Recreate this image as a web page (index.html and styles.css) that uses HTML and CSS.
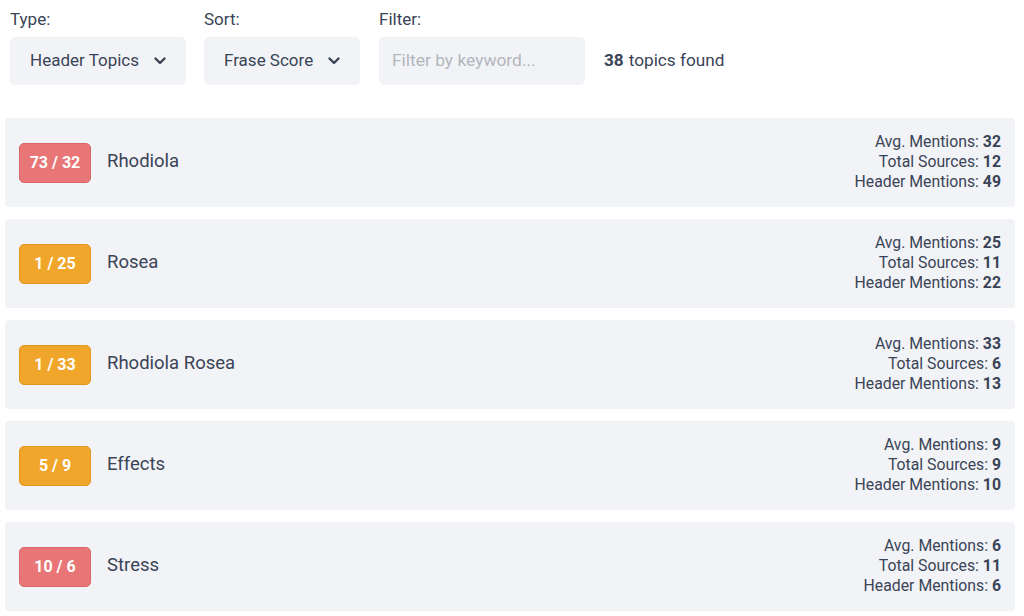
FILE: index.html
```html
<!DOCTYPE html>
<html>
<head>
<meta charset="utf-8">
<link rel="stylesheet" href="styles.css">
</head>
<body>
<div class="page">
  <div class="controls">
    <div class="field">
      <div class="label">Type:</div>
      <div class="select type-select"><span>Header Topics</span>
        <svg class="chev" width="12" height="8" viewBox="0 0 12 8"><path d="M1.5 1.5 L6 6 L10.5 1.5" fill="none" stroke="#3a4456" stroke-width="2.4" stroke-linecap="round" stroke-linejoin="round"/></svg>
      </div>
    </div>
    <div class="field">
      <div class="label">Sort:</div>
      <div class="select sort-select"><span>Frase Score</span>
        <svg class="chev" width="12" height="8" viewBox="0 0 12 8"><path d="M1.5 1.5 L6 6 L10.5 1.5" fill="none" stroke="#3a4456" stroke-width="2.4" stroke-linecap="round" stroke-linejoin="round"/></svg>
      </div>
    </div>
    <div class="field filter-field">
      <div class="label">Filter:</div>
      <div class="input">Filter by keyword...</div>
    </div>
    <div class="count"><b>38</b> topics found</div>
  </div>

  <div class="list">
    <div class="card">
      <div class="badge red">73 / 32</div>
      <div class="name">Rhodiola</div>
      <div class="stats">
        <div>Avg. Mentions: <b>32</b></div>
        <div>Total Sources: <b>12</b></div>
        <div>Header Mentions: <b>49</b></div>
      </div>
    </div>
    <div class="card">
      <div class="badge orange">1 / 25</div>
      <div class="name">Rosea</div>
      <div class="stats">
        <div>Avg. Mentions: <b>25</b></div>
        <div>Total Sources: <b>11</b></div>
        <div>Header Mentions: <b>22</b></div>
      </div>
    </div>
    <div class="card">
      <div class="badge orange">1 / 33</div>
      <div class="name">Rhodiola Rosea</div>
      <div class="stats">
        <div>Avg. Mentions: <b>33</b></div>
        <div>Total Sources: <b>6</b></div>
        <div>Header Mentions: <b>13</b></div>
      </div>
    </div>
    <div class="card">
      <div class="badge orange">5 / 9</div>
      <div class="name">Effects</div>
      <div class="stats">
        <div>Avg. Mentions: <b>9</b></div>
        <div>Total Sources: <b>9</b></div>
        <div>Header Mentions: <b>10</b></div>
      </div>
    </div>
    <div class="card">
      <div class="badge red">10 / 6</div>
      <div class="name">Stress</div>
      <div class="stats">
        <div>Avg. Mentions: <b>6</b></div>
        <div>Total Sources: <b>11</b></div>
        <div>Header Mentions: <b>6</b></div>
      </div>
    </div>
  </div>
</div>
</body>
</html>
```

FILE: styles.css
```css
* { box-sizing: border-box; }
html, body { margin: 0; padding: 0; background: #ffffff; }
body {
  font-family: Roboto, "Liberation Sans", Arial, sans-serif;
  color: #3a4456;
}
.page {
  padding: 9px 9px 0 5px;
}
.controls {
  display: flex;
  align-items: flex-end;
  padding-left: 5px;
}
.field {
  display: flex;
  flex-direction: column;
  gap: 8px;
  margin-right: 18px;
}
.filter-field { margin-left: 1px; }
.label {
  font-size: 17px;
  line-height: 20px;
}
.select {
  height: 48px;
  background: #f1f3f7;
  border-radius: 5px;
  display: flex;
  align-items: center;
  padding: 0 20px;
  font-size: 17px;
  gap: 15px;
  white-space: nowrap;
}
.select span { padding-bottom: 3px; }
.type-select { width: 176px; }
.sort-select { width: 156px; }
.chev { flex: none; margin-top: 0px; }
.input {
  width: 206px;
  height: 48px;
  background: #f1f3f7;
  border-radius: 5px;
  display: flex;
  align-items: center;
  padding: 0 13px 2px;
  font-size: 17.4px;
  color: #b3b6bd;
  white-space: nowrap;
}
.count {
  height: 48px;
  display: flex;
  align-items: center;
  gap: 5px;
  font-size: 17.2px;
  padding-bottom: 2px;
  margin-left: 1px;
  white-space: nowrap;
}
.count b { font-weight: 700; }
.list {
  margin-top: 33px;
  display: flex;
  flex-direction: column;
  gap: 12px;
}
.card {
  background: #f2f3f7;
  border-radius: 4px;
  height: 89px;
  display: flex;
  align-items: center;
  padding: 0 14px;
}
.badge {
  width: 72px;
  height: 40px;
  border-radius: 5px;
  display: flex;
  align-items: center;
  justify-content: center;
  color: #ffffff;
  font-weight: 700;
  font-size: 16px;
  flex: none;
  padding-bottom: 1px;
}
.badge.red { background: #e87676; border: 1px solid #d96565; }
.badge.orange { background: #f0a62a; border: 1px solid #e09720; }
.name {
  margin-left: 16px;
  font-size: 18.5px;
  flex: 1;
  padding-bottom: 3px;
}
.stats {
  text-align: right;
  font-size: 15.8px;
  line-height: 20px;
  padding-bottom: 2px;
}
.stats b { font-weight: 700; }
```
